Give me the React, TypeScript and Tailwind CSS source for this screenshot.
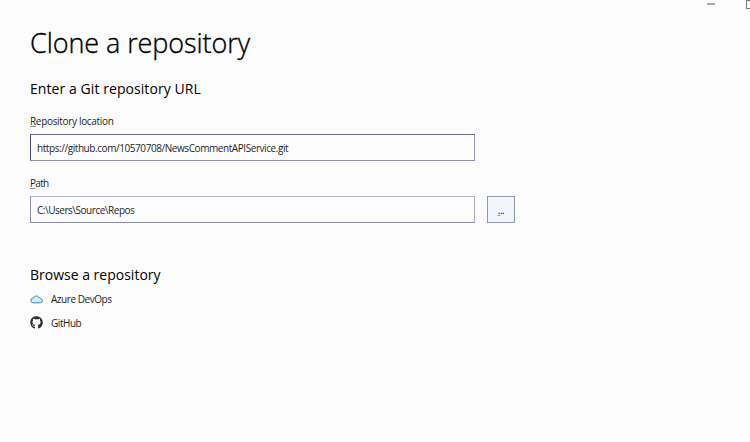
import { FaGithub } from "react-icons/fa";

function CloudIcon() {
  return (
    <svg width="13" height="10" viewBox="0 0 13 10" className="-mt-px shrink-0">
      <path
        d="M3 8.8h7.4a2 2 0 0 0 .2-4 2.1 2.1 0 0 0-1.8-1.5A3 3 0 0 0 3.4 4.1 2.35 2.35 0 0 0 3 8.8Z"
        fill="#d3ecf8"
        stroke="#3b8db5"
        strokeWidth="1"
      />
    </svg>
  );
}

export default function App() {
  return (
    <main className="flex h-[442px] w-[750px] flex-col overflow-hidden bg-[#fcfcfc] font-['Open_Sans','Noto_Sans',sans-serif] text-[10px] leading-4 text-[#1e1e1e]">
      <div className="flex h-6 shrink-0 justify-end gap-[31px]">
        <div className="mt-[3px] h-[2px] w-2 bg-[#a9a9ab]" />
        <div className="-mr-1 h-[9px] w-2 border border-[#77777b]" />
      </div>
      <div className="flex flex-col pl-[30px]">
        <h1 className="-mt-px h-10 text-[27px] leading-10 tracking-[-0.08px] text-black font-light [-webkit-text-stroke:0.35px_black]">Clone a repository</h1>
        <h2 className="mt-4 h-5 text-[14px] leading-5 tracking-[0.07px] text-black">Enter a Git repository URL</h2>
        <label className="mt-[14px] h-4 tracking-[-0.32px]"><u className="decoration-[#8a8a8a]">R</u>epository location</label>
        <div className="mt-[5px] flex h-[27px] w-[445px] items-center border border-t-[#6a6a9a] border-r-[#9797b4] border-b-[#9092b0] border-l-[#4a4a82] bg-[#fdfdfd] pl-[6px] tracking-[-0.43px]">
          https://github.com/10570708/NewsCommentAPIService.git
        </div>
        <label className="mt-[14px] h-4 tracking-[-0.7px]"><u className="decoration-[#8a8a8a]">P</u>ath</label>
        <div className="mt-[5px] flex gap-3">
          <div className="flex h-[27px] w-[445px] items-center border border-t-[#b4b4c4] border-r-[#aaaabc] border-b-[#8c8cab] border-l-[#8c8cab] bg-[#fdfdfd] pl-[6px] tracking-[-0.47px]">
            C:\Users\Source\Repos
          </div>
          <button className="flex h-[27px] w-7 items-center justify-center border border-[#9299ad] bg-[#f2f5fc]"><span className="tracking-[-0.4px]"><u className="decoration-[#8a8a8a]">.</u>..</span></button>
        </div>
        <h2 className="mt-[42px] h-5 text-[14px] leading-5 text-black">Browse a repository</h2>
        <div className="mt-[6px] flex h-4 items-center gap-2 tracking-[-0.46px]"><CloudIcon />Azure DevOps</div>
        <div className="mt-2 flex h-4 items-center gap-2 tracking-[-0.45px]"><FaGithub className="-mt-px w-[13px] text-[#303034]" size={13} />GitHub</div>
      </div>
    </main>
  );
}
